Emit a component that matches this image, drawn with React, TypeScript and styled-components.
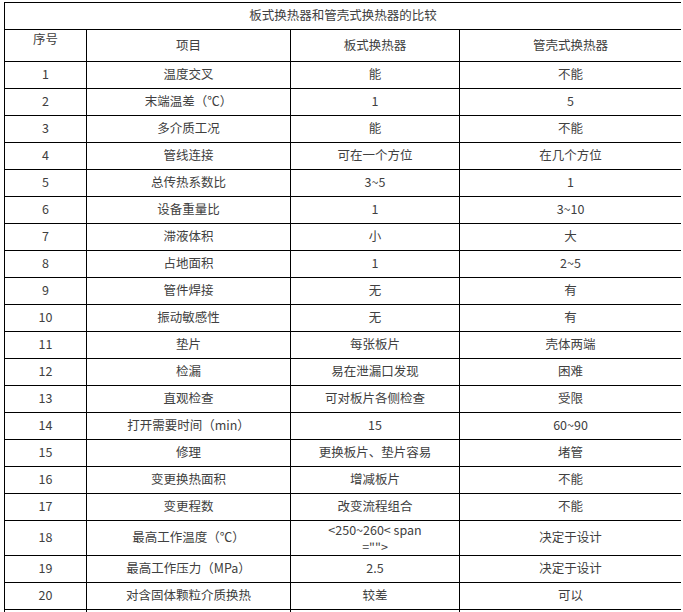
import React from "react";
import styled, { createGlobalStyle } from "styled-components";

const GlobalStyle = createGlobalStyle`
  html, body {
    margin: 0;
    padding: 0;
    background: #fff;
  }
  body {
    font-family: "Noto Sans CJK SC", "Microsoft YaHei", sans-serif;
    color: #404040;
  }
`;

const Page = styled.div`
  padding: 2px 0 0 4px;
  width: 677px;
  height: 610px;
  overflow: hidden;
`;

const Table = styled.table`
  width: 677px;
  border-collapse: collapse;
  table-layout: fixed;
  font-size: 12.5px;
  line-height: 16px;
`;

const Caption = styled.td`
  border: 1px solid #000;
  height: 24px;
  padding: 0 4px 2px;
  text-align: center;
  vertical-align: middle;
`;

const HeadCell = styled.td<{ $top?: boolean }>`
  border: 1px solid #000;
  height: 30px;
  padding: ${(p) => (p.$top ? "1px 4px 0" : "0 4px 1px")};
  text-align: center;
  vertical-align: ${(p) => (p.$top ? "top" : "middle")};
`;

const Cell = styled.td`
  border: 1px solid #000;
  height: 24px;
  padding: 0 4px 2px;
  text-align: center;
  vertical-align: middle;
  word-break: break-all;
`;

const Wrapped = styled.span`
  display: block;
  line-height: 17px;
  margin-bottom: -2px;
`;

const rows: [string, string, React.ReactNode, string][] = [
  ["1", "温度交叉", "能", "不能"],
  ["2", "末端温差（℃）", "1", "5"],
  ["3", "多介质工况", "能", "不能"],
  ["4", "管线连接", "可在一个方位", "在几个方位"],
  ["5", "总传热系数比", "3~5", "1"],
  ["6", "设备重量比", "1", "3~10"],
  ["7", "滞液体积", "小", "大"],
  ["8", "占地面积", "1", "2~5"],
  ["9", "管件焊接", "无", "有"],
  ["10", "振动敏感性", "无", "有"],
  ["11", "垫片", "每张板片", "壳体两端"],
  ["12", "检漏", "易在泄漏口发现", "困难"],
  ["13", "直观检查", "可对板片各侧检查", "受限"],
  ["14", "打开需要时间（min）", "15", "60~90"],
  ["15", "修理", "更换板片、垫片容易", "堵管"],
  ["16", "变更换热面积", "增减板片", "不能"],
  ["17", "变更程数", "改变流程组合", "不能"],
  [
    "18",
    "最高工作温度（℃）",
    <Wrapped>
      &lt;250~260&lt; span
      <br />
      =""&gt;
    </Wrapped>,
    "决定于设计",
  ],
  ["19", "最高工作压力（MPa）", "2.5", "决定于设计"],
  ["20", "对含固体颗粒介质换热", "较差", "可以"],
  ["", "", "", ""],
];

export default function App() {
  return (
    <>
      <GlobalStyle />
      <Page>
        <Table>
          <colgroup>
            <col style={{ width: 82 }} />
            <col style={{ width: 204 }} />
            <col style={{ width: 169 }} />
            <col style={{ width: 222 }} />
          </colgroup>
          <tbody>
            <tr>
              <Caption colSpan={4}>板式换热器和管壳式换热器的比较</Caption>
            </tr>
            <tr>
              <HeadCell $top>序号</HeadCell>
              <HeadCell>项目</HeadCell>
              <HeadCell>板式换热器</HeadCell>
              <HeadCell>管壳式换热器</HeadCell>
            </tr>
            {rows.map((r, i) => (
              <tr key={i}>
                <Cell>{r[0]}</Cell>
                <Cell>{r[1]}</Cell>
                <Cell>{r[2]}</Cell>
                <Cell>{r[3]}</Cell>
              </tr>
            ))}
          </tbody>
        </Table>
      </Page>
    </>
  );
}
